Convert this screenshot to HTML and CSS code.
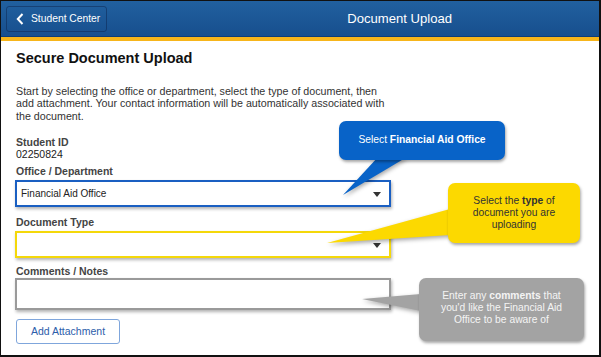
FILE: index.html
```html
<!DOCTYPE html>
<html>
<head>
<meta charset="utf-8">
<link rel="stylesheet" href="styles.css">
</head>
<body>
<div class="frame">
  <header class="topbar">
    <button class="back">
      <svg class="chev" width="8" height="12" viewBox="0 0 8 12"><path d="M6.5 1 L1.8 6 L6.5 11" fill="none" stroke="#fff" stroke-width="2"/></svg>
      <span>Student Center</span>
    </button>
    <div class="title">Document Upload</div>
  </header>
  <div class="stripe"></div>
  <main class="content">
    <h1 class="heading">Secure Document Upload</h1>
    <p class="intro">Start by selecting the office or department, select the type of document, then add attachment. Your contact information will be automatically associated with the document.</p>
    <div class="info">
      <div class="label">Student ID</div>
      <div class="value">02250824</div>
    </div>
    <div class="label field-label">Office / Department</div>
    <div class="field field-blue"><span>Financial Aid Office</span><span class="arrow"></span></div>
    <div class="label field-label">Document Type</div>
    <div class="field field-yellow"><span></span><span class="arrow"></span></div>
    <div class="label field-label label-comments">Comments / Notes</div>
    <div class="field field-gray"></div>
    <button class="attach">Add Attachment</button>
  </main>

  <svg class="tails" width="601" height="357" viewBox="0 0 601 357">
    <polygon points="378,157 407,157 343,195" fill="#0863c8"/>
    <polygon points="450,209 450,235 327,243" fill="#fcd900"/>
    <polygon points="421,294 421,311 362,299" fill="#a3a3a3"/>
  </svg>
  <div class="bubble bubble-blue"><span>Select <b>Financial Aid Office</b></span></div>
  <div class="bubble bubble-yellow"><span>Select the <b>type</b> of<br>document you are<br>uploading</span></div>
  <div class="bubble bubble-gray"><span>Enter any <b>comments</b> that<br>you'd like the Financial Aid<br>Office to be aware of</span></div>
</div>
</body>
</html>
```

FILE: styles.css
```css
html, body {
  margin: 0;
  padding: 0;
  background: #fff;
}
body {
  font-family: "Liberation Sans", Arial, sans-serif;
}
.frame {
  position: relative;
  width: 601px;
  height: 357px;
  box-sizing: border-box;
  border: 1px solid #111;
  border-right-width: 2px;
  border-bottom-width: 2px;
  overflow: hidden;
  background: #fff;
}
.topbar {
  height: 35px;
  background: linear-gradient(#21609f, #174f8e);
  border-bottom: 1px solid #0e3d78;
  display: flex;
  align-items: center;
  justify-content: space-between;
  padding: 0 147px 0 5px;
}
.back {
  height: 26px;
  width: 101px;
  box-sizing: border-box;
  border: 1px solid rgba(10, 30, 70, 0.45);
  border-radius: 3px;
  background: transparent;
  color: #fff;
  display: flex;
  align-items: center;
  gap: 7px;
  padding: 0 0 0 9px;
  font-family: "Liberation Sans", Arial, sans-serif;
  font-size: 10.3px;
}
.chev {
  display: block;
}
.title {
  color: #fff;
  font-size: 13.1px;
}
.stripe {
  height: 4px;
  background: #f7b51a;
}
.content {
  padding: 0 0 0 15px;
  display: flex;
  flex-direction: column;
  align-items: flex-start;
}
.heading {
  margin: 9px 0 0 0;
  font-size: 14.5px;
  line-height: 17px;
  font-weight: bold;
  color: #111;
}
.intro {
  margin: 18px 0 0 0;
  width: 380px;
  font-size: 10.7px;
  line-height: 12.3px;
  color: #333;
}
.info {
  margin-top: 14px;
}
.label {
  font-size: 10.5px;
  line-height: 12px;
  font-weight: bold;
  color: #444;
}
.value {
  font-size: 10.5px;
  line-height: 12px;
  color: #222;
}
.field-label {
  margin-top: 5px;
}
.field {
  margin: 3px 0 0 -1px;
  width: 376px;
  height: 27px;
  box-sizing: border-box;
  border: 2px solid #999;
  background: #fff;
  box-shadow: 1px 2px 3px rgba(0, 0, 0, 0.3);
  display: flex;
  align-items: center;
  justify-content: space-between;
  padding: 0 8px 0 4px;
  font-size: 10px;
  color: #222;
}
.field-blue {
  border-color: #1a5fc2;
}
.field-yellow {
  border-color: #f4d80a;
  margin-top: 3px;
}
.field-gray {
  border-color: #9a9a9a;
  height: 32px;
  margin-top: 1px;
}
.field + .field-label {
  margin-top: 9px;
}
.field + .label-comments {
  margin-top: 7px;
}
.arrow {
  width: 0;
  height: 0;
  border-left: 4px solid transparent;
  border-right: 4px solid transparent;
  border-top: 5px solid #333;
  margin-top: 3px;
}
.attach {
  margin-top: 9px;
  width: 104px;
  height: 25px;
  box-sizing: border-box;
  border: 1px solid #7fa6dc;
  border-radius: 3px;
  background: #fff;
  color: #2c5daa;
  font-family: "Liberation Sans", Arial, sans-serif;
  font-size: 10.5px;
  padding: 0;
}
.tails {
  position: absolute;
  left: -1px;
  top: -1px;
  filter: drop-shadow(1px 2px 2px rgba(0, 0, 0, 0.35));
}
.bubble {
  position: absolute;
  box-sizing: border-box;
  border-radius: 7px;
  box-shadow: 1px 2px 3px rgba(0, 0, 0, 0.35);
  display: flex;
  align-items: center;
  justify-content: center;
  text-align: center;
  font-size: 10.3px;
  line-height: 12.3px;
}
.bubble-blue {
  left: 338px;
  top: 120px;
  width: 166px;
  height: 39px;
  background: #0863c8;
  color: #fff;
}
.bubble-yellow {
  left: 447px;
  top: 182px;
  width: 132px;
  height: 60px;
  background: #fcd900;
  color: #333;
}
.bubble-gray {
  left: 418px;
  top: 277px;
  width: 165px;
  height: 63px;
  background: #a3a3a3;
  color: #f4f4f4;
  padding-bottom: 3px;
}
```
